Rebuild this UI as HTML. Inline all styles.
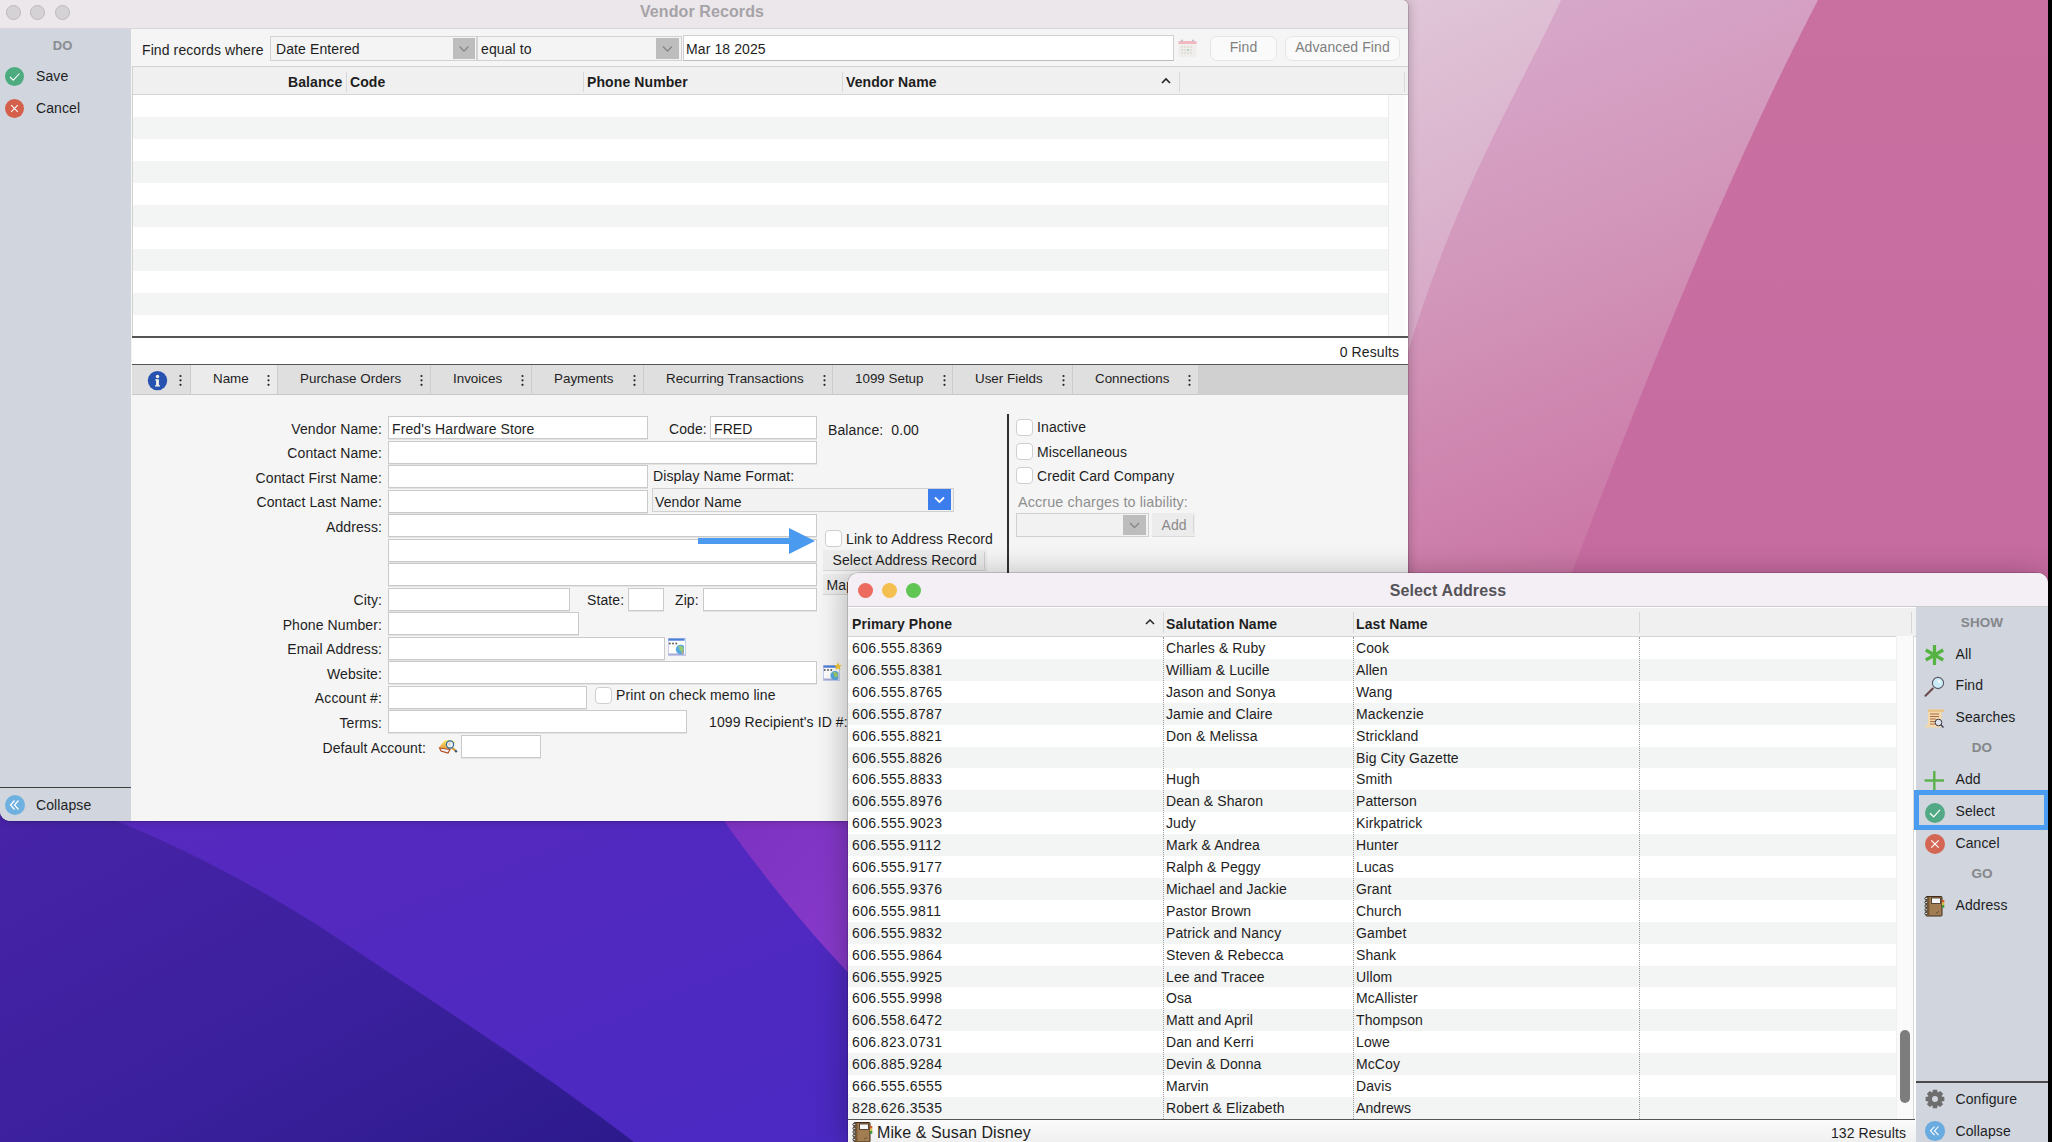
<!DOCTYPE html>
<html><head><meta charset="utf-8">
<style>
*{box-sizing:border-box;margin:0;padding:0}
html,body{width:2052px;height:1142px;overflow:hidden}
body{position:relative;background:#000;font-family:"Liberation Sans",sans-serif;font-size:14px;color:#1e1e1e}
.a{position:absolute}
.t{position:absolute;white-space:nowrap;line-height:1;letter-spacing:0.1px}
.b{font-weight:bold}
.num{font-size:14px;letter-spacing:0.4px}
.inp{background:#fff;border:1px solid #cacaca;box-shadow:0 1px 0 #e3e3e3}
</style></head><body>
<!-- desktop -->
<svg class="a" style="left:0;top:0" width="2048" height="1142" viewBox="0 0 2048 1142">
<defs>
<linearGradient id="pk" x1="0" y1="0" x2="0" y2="1">
<stop offset="0" stop-color="#c970a0"/><stop offset="1" stop-color="#c466a2"/></linearGradient>
<linearGradient id="pm" x1="0" y1="0" x2="0.3" y2="1">
<stop offset="0" stop-color="#d8acce"/><stop offset="0.5" stop-color="#d296ba"/><stop offset="1" stop-color="#cb78a6"/></linearGradient>
<linearGradient id="pl" x1="0" y1="0" x2="0.2" y2="1">
<stop offset="0" stop-color="#e0c6d8"/><stop offset="1" stop-color="#d6a4c4"/></linearGradient>
<linearGradient id="pu" x1="0" y1="0" x2="1" y2="1">
<stop offset="0" stop-color="#5829be"/><stop offset="1" stop-color="#4a29c2"/></linearGradient>
<linearGradient id="pd" x1="0" y1="0" x2="1" y2="1">
<stop offset="0" stop-color="#4824a8"/><stop offset="0.6" stop-color="#3a209c"/><stop offset="1" stop-color="#2c1a8c"/></linearGradient>
<linearGradient id="pg" x1="0" y1="0" x2="1" y2="1">
<stop offset="0" stop-color="#7a30c0"/><stop offset="1" stop-color="#8a3ccc"/></linearGradient>
</defs>
<rect x="0" y="0" width="2048" height="1142" fill="url(#pk)"/>
<path d="M1400 0 H1818 C1740 150 1660 340 1571 575 H1400 Z" fill="url(#pm)"/>
<path d="M1400 0 H1561 C1520 90 1450 200 1400 380 Z" fill="url(#pl)"/>
<rect x="0" y="800" width="860" height="342" fill="url(#pu)"/>
<path d="M0 800 H60 C150 830 250 880 340 940 C430 1000 540 1070 634 1142 H0 Z" fill="url(#pd)"/>
<path d="M709 800 C750 858 795 918 860 985 V800 Z" fill="url(#pg)"/>
</svg>
<div class="a" style="left:2048px;top:0;width:4px;height:1142px;background:#000"></div>

<!-- ============ VENDOR RECORDS WINDOW ============ -->
<div class="a" id="w1" style="left:0;top:0;width:1408px;height:821px;background:#f5f5f5;border-radius:0 6px 10px 10px;overflow:hidden;box-shadow:0 0 0 0.5px rgba(0,0,0,0.25),2px 0 10px rgba(0,0,0,0.2)">

<!-- title bar -->
<div class="a" style="left:0;top:0;width:1408px;height:29px;background:#ebe7eb;border-bottom:1px solid #d9d5da"></div>
<div class="a" style="left:6px;top:5px;width:15px;height:15px;border-radius:50%;background:#d5d2d6;border:1px solid #bcb8bd"></div>
<div class="a" style="left:30px;top:5px;width:15px;height:15px;border-radius:50%;background:#d5d2d6;border:1px solid #bcb8bd"></div>
<div class="a" style="left:55px;top:5px;width:15px;height:15px;border-radius:50%;background:#d5d2d6;border:1px solid #bcb8bd"></div>
<div class="t b" style="left:0;width:1404px;text-align:center;top:4px;font-size:16px;color:#a6a3a7">Vendor Records</div>
<!-- sidebar -->
<div class="a" style="left:0;top:29px;width:131px;height:792px;background:#d0d5de"></div>
<div class="t b" style="left:0;width:125px;text-align:center;top:39px;font-size:13px;color:#8a8c90">DO</div>
<div class="a" style="left:5px;top:67px;width:19px;height:19px;border-radius:50%;background:#4dab80"></div>
<svg class="a" style="left:5px;top:67px" width="19" height="19"><path d="M5 10 L8.3 13.2 L14.5 6.5" stroke="#fff" stroke-width="1.1" fill="none"/></svg>
<div class="t" style="left:36px;top:69px;font-size:14px">Save</div>
<div class="a" style="left:5px;top:99px;width:19px;height:19px;border-radius:50%;background:#d4604c"></div>
<svg class="a" style="left:5px;top:99px" width="19" height="19"><path d="M6.2 6.2 L12.8 12.8 M12.8 6.2 L6.2 12.8" stroke="#fff" stroke-width="1.1" fill="none"/></svg>
<div class="t" style="left:36px;top:101px;font-size:14px">Cancel</div>
<div class="a" style="left:0;top:787px;width:131px;height:1px;background:#404040"></div>
<div class="a" style="left:5px;top:795px;width:20px;height:20px;border-radius:50%;background:#6eb0e0"></div>
<svg class="a" style="left:5px;top:795px" width="20" height="20"><path d="M9.5 5.5 L5.5 10 L9.5 14.5 M13.5 5.5 L9.5 10 L13.5 14.5" stroke="#fff" stroke-width="1.2" fill="none"/></svg>
<div class="t" style="left:36px;top:798px;font-size:14px">Collapse</div>

<!-- find bar -->
<div class="t" style="left:142px;top:43px;font-size:14px">Find records where</div>
<div class="a" style="left:270px;top:36px;width:207px;height:25px;background:#f4f4f4;border:1px solid #d2d2d2"></div>
<div class="t" style="left:276px;top:42px;font-size:14px">Date Entered</div>
<div class="a" style="left:453px;top:38px;width:22px;height:21px;background:#bdbdbd"></div>
<svg class="a" style="left:453px;top:38px" width="22" height="21"><path d="M6.5 8.5 L11 13 L15.5 8.5" stroke="#868686" stroke-width="1.3" fill="none"/></svg>
<div class="a" style="left:477px;top:36px;width:205px;height:25px;background:#f4f4f4;border:1px solid #d2d2d2"></div>
<div class="t" style="left:481px;top:42px;font-size:14px">equal to</div>
<div class="a" style="left:656px;top:38px;width:23px;height:21px;background:#bdbdbd"></div>
<svg class="a" style="left:656px;top:38px" width="23" height="21"><path d="M7 8.5 L11.5 13 L16 8.5" stroke="#868686" stroke-width="1.3" fill="none"/></svg>
<div class="a" style="left:683px;top:35px;width:491px;height:26px;background:#fff;border:1px solid #cfcfcf;border-bottom-color:#bcbcbc"></div>
<div class="t" style="left:686px;top:42px;font-size:14px">Mar 18 2025</div>
<svg class="a" style="left:1178px;top:38px" width="19" height="20">
<rect x="0.5" y="3" width="18" height="16" fill="#f0eeec"/>
<rect x="0.5" y="3" width="18" height="3" fill="#f0b8c0"/>
<circle cx="4" cy="2.5" r="1" fill="#b9b9c8"/><circle cx="15" cy="2.5" r="1" fill="#b9b9c8"/>
<g fill="#e3e0dc"><rect x="3" y="8" width="2" height="2"/><rect x="6" y="8" width="2" height="2"/><rect x="9" y="8" width="2" height="2"/><rect x="12" y="8" width="2" height="2"/><rect x="3" y="11" width="2" height="2"/><rect x="12" y="11" width="2" height="2"/><rect x="3" y="14" width="2" height="2"/><rect x="6" y="14" width="2" height="2"/><rect x="9" y="14" width="2" height="2"/><rect x="12" y="14" width="2" height="2"/><rect x="6" y="11" width="2" height="2"/></g>
<rect x="9" y="11" width="2" height="2" fill="#a8dcc8"/>
</svg>
<div class="a" style="left:1210px;top:36px;width:67px;height:25px;background:#fafafa;border:1px solid #e6e6e6;border-radius:7px"></div>
<div class="t" style="left:1210px;width:67px;text-align:center;top:40px;font-size:14px;color:#7f7f7f">Find</div>
<div class="a" style="left:1285px;top:36px;width:115px;height:25px;background:#fafafa;border:1px solid #e6e6e6;border-radius:7px"></div>
<div class="t" style="left:1285px;width:115px;text-align:center;top:40px;font-size:14px;color:#7f7f7f">Advanced Find</div>

<!-- table -->
<div class="a" id="vt" style="left:132px;top:66px;width:1276px;height:272px;background:#fff;border-top:1px solid #d2d2d2;border-left:1px solid #d2d2d2"></div>
<div class="a" style="left:133px;top:67px;width:1275px;height:28px;background:#f0f0f0;border-bottom:1px solid #d6d6d6"></div>
<div class="a" style="left:133px;top:95px;width:1255px;height:22px;background:#fff"></div>
<div class="a" style="left:133px;top:117px;width:1255px;height:22px;background:#f3f4f4"></div>
<div class="a" style="left:133px;top:139px;width:1255px;height:22px;background:#fff"></div>
<div class="a" style="left:133px;top:161px;width:1255px;height:22px;background:#f3f4f4"></div>
<div class="a" style="left:133px;top:183px;width:1255px;height:22px;background:#fff"></div>
<div class="a" style="left:133px;top:205px;width:1255px;height:22px;background:#f3f4f4"></div>
<div class="a" style="left:133px;top:227px;width:1255px;height:22px;background:#fff"></div>
<div class="a" style="left:133px;top:249px;width:1255px;height:22px;background:#f3f4f4"></div>
<div class="a" style="left:133px;top:271px;width:1255px;height:22px;background:#fff"></div>
<div class="a" style="left:133px;top:293px;width:1255px;height:22px;background:#f3f4f4"></div>
<div class="a" style="left:133px;top:315px;width:1255px;height:22px;background:#fff"></div>

<div class="a" style="left:1388px;top:95px;width:17px;height:242px;background:#fafafa;border-left:1px solid #ececec"></div>
<div class="a" style="left:346px;top:72px;width:1px;height:20px;background:#d8d8d8"></div>
<div class="a" style="left:583px;top:72px;width:1px;height:20px;background:#d8d8d8"></div>
<div class="a" style="left:842px;top:72px;width:1px;height:20px;background:#d8d8d8"></div>
<div class="a" style="left:1179px;top:72px;width:1px;height:20px;background:#d8d8d8"></div>
<div class="a" style="left:1404px;top:72px;width:1px;height:20px;background:#d8d8d8"></div>
<div class="t b" style="left:288px;top:75px;font-size:14px">Balance</div>
<div class="t b" style="left:350px;top:75px;font-size:14px">Code</div>
<div class="t b" style="left:587px;top:75px;font-size:14px">Phone Number</div>
<div class="t b" style="left:846px;top:75px;font-size:14px">Vendor Name</div>
<svg class="a" style="left:1160px;top:76px" width="12" height="9"><path d="M2 7 L6 3 L10 7" stroke="#222" stroke-width="1.6" fill="none"/></svg>
<div class="a" style="left:132px;top:336px;width:1276px;height:2px;background:#555"></div>
<div class="a" style="left:132px;top:338px;width:1276px;height:26px;background:#fff"></div>
<div class="t" style="left:1000px;width:399px;text-align:right;top:345px;font-size:14px">0 Results</div>
<div class="a" style="left:132px;top:364px;width:1276px;height:1px;background:#555"></div>

<!-- tabs -->
<div class="a" style="left:132px;top:365px;width:1276px;height:30px;background:#d0d0d0"></div>
<div class="a" style="left:132px;top:365px;width:59px;height:30px;background:#dfdfdf;border-right:1px solid #cdcdcd;border-bottom:1px solid #c9c9c9"></div>
<svg class="a" style="left:178px;top:373px" width="4" height="14"><circle cx="2.5" cy="3" r="1.1" fill="#262626"/><circle cx="2.5" cy="7.3" r="1.1" fill="#262626"/><circle cx="2.5" cy="11.8" r="1.1" fill="#262626"/></svg>
<div class="a" style="left:191px;top:365px;width:87px;height:30px;background:#ebebeb;border-right:1px solid #cdcdcd;border-bottom:1px solid #c9c9c9"></div>
<div class="t" style="left:213px;top:372px;font-size:13.4px;letter-spacing:0">Name</div>
<svg class="a" style="left:266px;top:373px" width="4" height="14"><circle cx="2.5" cy="3" r="1.1" fill="#262626"/><circle cx="2.5" cy="7.3" r="1.1" fill="#262626"/><circle cx="2.5" cy="11.8" r="1.1" fill="#262626"/></svg>
<div class="a" style="left:278px;top:365px;width:153px;height:30px;background:#dfdfdf;border-right:1px solid #cdcdcd;border-bottom:1px solid #c9c9c9"></div>
<div class="t" style="left:300px;top:372px;font-size:13.4px;letter-spacing:0">Purchase Orders</div>
<svg class="a" style="left:419px;top:373px" width="4" height="14"><circle cx="2.5" cy="3" r="1.1" fill="#262626"/><circle cx="2.5" cy="7.3" r="1.1" fill="#262626"/><circle cx="2.5" cy="11.8" r="1.1" fill="#262626"/></svg>
<div class="a" style="left:431px;top:365px;width:101px;height:30px;background:#dfdfdf;border-right:1px solid #cdcdcd;border-bottom:1px solid #c9c9c9"></div>
<div class="t" style="left:453px;top:372px;font-size:13.4px;letter-spacing:0">Invoices</div>
<svg class="a" style="left:520px;top:373px" width="4" height="14"><circle cx="2.5" cy="3" r="1.1" fill="#262626"/><circle cx="2.5" cy="7.3" r="1.1" fill="#262626"/><circle cx="2.5" cy="11.8" r="1.1" fill="#262626"/></svg>
<div class="a" style="left:532px;top:365px;width:112px;height:30px;background:#dfdfdf;border-right:1px solid #cdcdcd;border-bottom:1px solid #c9c9c9"></div>
<div class="t" style="left:554px;top:372px;font-size:13.4px;letter-spacing:0">Payments</div>
<svg class="a" style="left:632px;top:373px" width="4" height="14"><circle cx="2.5" cy="3" r="1.1" fill="#262626"/><circle cx="2.5" cy="7.3" r="1.1" fill="#262626"/><circle cx="2.5" cy="11.8" r="1.1" fill="#262626"/></svg>
<div class="a" style="left:644px;top:365px;width:189px;height:30px;background:#dfdfdf;border-right:1px solid #cdcdcd;border-bottom:1px solid #c9c9c9"></div>
<div class="t" style="left:666px;top:372px;font-size:13.4px;letter-spacing:0">Recurring Transactions</div>
<svg class="a" style="left:822px;top:373px" width="4" height="14"><circle cx="2.5" cy="3" r="1.1" fill="#262626"/><circle cx="2.5" cy="7.3" r="1.1" fill="#262626"/><circle cx="2.5" cy="11.8" r="1.1" fill="#262626"/></svg>
<div class="a" style="left:833px;top:365px;width:120px;height:30px;background:#dfdfdf;border-right:1px solid #cdcdcd;border-bottom:1px solid #c9c9c9"></div>
<div class="t" style="left:855px;top:372px;font-size:13.4px;letter-spacing:0">1099 Setup</div>
<svg class="a" style="left:942px;top:373px" width="4" height="14"><circle cx="2.5" cy="3" r="1.1" fill="#262626"/><circle cx="2.5" cy="7.3" r="1.1" fill="#262626"/><circle cx="2.5" cy="11.8" r="1.1" fill="#262626"/></svg>
<div class="a" style="left:953px;top:365px;width:120px;height:30px;background:#dfdfdf;border-right:1px solid #cdcdcd;border-bottom:1px solid #c9c9c9"></div>
<div class="t" style="left:975px;top:372px;font-size:13.4px;letter-spacing:0">User Fields</div>
<svg class="a" style="left:1061px;top:373px" width="4" height="14"><circle cx="2.5" cy="3" r="1.1" fill="#262626"/><circle cx="2.5" cy="7.3" r="1.1" fill="#262626"/><circle cx="2.5" cy="11.8" r="1.1" fill="#262626"/></svg>
<div class="a" style="left:1073px;top:365px;width:126px;height:30px;background:#dfdfdf;border-right:1px solid #cdcdcd;border-bottom:1px solid #c9c9c9"></div>
<div class="t" style="left:1095px;top:372px;font-size:13.4px;letter-spacing:0">Connections</div>
<svg class="a" style="left:1187px;top:373px" width="4" height="14"><circle cx="2.5" cy="3" r="1.1" fill="#262626"/><circle cx="2.5" cy="7.3" r="1.1" fill="#262626"/><circle cx="2.5" cy="11.8" r="1.1" fill="#262626"/></svg>
<svg class="a" style="left:147px;top:370px" width="21" height="21" viewBox="0 0 21 21">
<circle cx="10.5" cy="10.6" r="9.7" fill="#2653b0"/>
<circle cx="10.5" cy="6.4" r="1.75" fill="#f4f1ea"/>
<path d="M8.3 9.3 H11.9 V15.2 H13 V16.4 H8 V15.2 H9.1 V10.5 H8.3 Z" fill="#f4f1ea"/>
</svg>


<div class="t" style="right:1026px;top:421.5px;font-size:14px">Vendor Name:</div>
<div class="t" style="right:1026px;top:446.0px;font-size:14px">Contact Name:</div>
<div class="t" style="right:1026px;top:470.5px;font-size:14px">Contact First Name:</div>
<div class="t" style="right:1026px;top:495.0px;font-size:14px">Contact Last Name:</div>
<div class="t" style="right:1026px;top:519.5px;font-size:14px">Address:</div>
<div class="t" style="right:1026px;top:593.0px;font-size:14px">City:</div>
<div class="t" style="right:1026px;top:617.5px;font-size:14px">Phone Number:</div>
<div class="t" style="right:1026px;top:642.0px;font-size:14px">Email Address:</div>
<div class="t" style="right:1026px;top:666.5px;font-size:14px">Website:</div>
<div class="t" style="right:1026px;top:691.0px;font-size:14px">Account #:</div>
<div class="t" style="right:1026px;top:715.5px;font-size:14px">Terms:</div>
<div class="a inp" style="left:388px;top:416px;width:260px;height:23px"></div>
<div class="t" style="left:392px;top:421.5px;font-size:14px">Fred's Hardware Store</div>
<div class="t" style="left:669px;top:421.5px;font-size:14px">Code:</div>
<div class="a inp" style="left:710px;top:416px;width:107px;height:23px"></div>
<div class="t" style="left:714px;top:421.5px;font-size:14px">FRED</div>
<div class="t" style="left:828px;top:422.5px;font-size:14px">Balance:&nbsp; 0.00</div>
<div class="a inp" style="left:388px;top:440.5px;width:429px;height:23px"></div>
<div class="a inp" style="left:388px;top:465px;width:260px;height:23px"></div>
<div class="t" style="left:653px;top:469px;font-size:14px">Display Name Format:</div>
<div class="a inp" style="left:388px;top:489.5px;width:260px;height:23px"></div>
<div class="a" style="left:652px;top:487.5px;width:302px;height:24px;background:#f2f2f2;border:1px solid #d0d0d0"></div>
<div class="t" style="left:655px;top:495.0px;font-size:14px">Vendor Name</div>
<div class="a" style="left:928px;top:489px;width:23px;height:21px;background:#3b7ded"></div>
<svg class="a" style="left:928px;top:489px" width="23" height="21"><path d="M7 8.5 L11.5 13 L16 8.5" stroke="#fff" stroke-width="1.8" fill="none"/></svg>
<div class="a inp" style="left:388px;top:514px;width:429px;height:23px"></div>
<div class="a inp" style="left:388px;top:538.5px;width:429px;height:23px"></div>
<div class="a inp" style="left:388px;top:563px;width:429px;height:23px"></div>
<div class="a inp" style="left:388px;top:587.5px;width:182px;height:23px"></div>
<div class="t" style="left:587px;top:593.0px;font-size:14px">State:</div>
<div class="a inp" style="left:628px;top:587.5px;width:36px;height:23px"></div>
<div class="t" style="left:675px;top:593.0px;font-size:14px">Zip:</div>
<div class="a inp" style="left:703px;top:587.5px;width:114px;height:23px"></div>
<div class="a inp" style="left:388px;top:612px;width:191px;height:23px"></div>
<div class="a inp" style="left:388px;top:636.5px;width:277px;height:23px"></div>
<div class="a inp" style="left:388px;top:661px;width:429px;height:23px"></div>
<div class="a inp" style="left:388px;top:685.5px;width:199px;height:23px"></div>
<div class="a inp" style="left:388px;top:710px;width:299px;height:23px"></div>
<div class="t" style="right:982px;top:740.5px;font-size:14px">Default Account:</div>
<div class="a inp" style="left:461px;top:735px;width:80px;height:23px"></div>
<svg class="a" style="left:696px;top:526px" width="122" height="30"><rect x="2" y="12" width="93" height="6" fill="#4a9af0"/><path d="M93 2 L119 15 L93 28 Z" fill="#4a9af0"/></svg>
<div class="a" style="left:825px;top:529.5px;width:17px;height:17px;background:#fff;border:1px solid #cfcfcf;border-radius:4px"></div>
<div class="t" style="left:846px;top:531.5px;font-size:14px">Link to Address Record</div>
<div class="a" style="left:823px;top:550px;width:164px;height:21px;background:#ececec;border-bottom:1px solid #d6d6d6"></div>
<div class="a" style="left:984px;top:552px;width:1px;height:17px;background:#d0d0d0"></div>
<div class="t" style="left:832.5px;top:553px;font-size:14px">Select Address Record</div>
<div class="a" style="left:823px;top:573.5px;width:60px;height:21px;background:#ececec;border-bottom:1px solid #d6d6d6"></div>
<div class="t" style="left:826.5px;top:578px;font-size:14px">Map</div>
<div class="a" style="left:1007px;top:414px;width:2px;height:160px;background:#303030"></div>
<div class="a" style="left:1016px;top:418.5px;width:17px;height:17px;background:#fff;border:1px solid #cfcfcf;border-radius:4px"></div>
<div class="t" style="left:1037px;top:420px;font-size:14px">Inactive</div>
<div class="a" style="left:1016px;top:443px;width:17px;height:17px;background:#fff;border:1px solid #cfcfcf;border-radius:4px"></div>
<div class="t" style="left:1037px;top:444.5px;font-size:14px">Miscellaneous</div>
<div class="a" style="left:1016px;top:467px;width:17px;height:17px;background:#fff;border:1px solid #cfcfcf;border-radius:4px"></div>
<div class="t" style="left:1037px;top:469px;font-size:14px">Credit Card Company</div>
<div class="t" style="left:1018px;top:494.5px;font-size:14.4px;color:#8f8f8f">Accrue charges to liability:</div>
<div class="a" style="left:1016px;top:513px;width:133px;height:24px;background:#f2f2f2;border:1px solid #d0d0d0"></div>
<div class="a" style="left:1123px;top:515px;width:23px;height:20px;background:#bdbdbd"></div>
<svg class="a" style="left:1123px;top:515px" width="23" height="20"><path d="M7 8 L11.5 12.5 L16 8" stroke="#868686" stroke-width="1.3" fill="none"/></svg>
<div class="a" style="left:1152px;top:513px;width:43px;height:24px;background:#ececec;border-bottom:1px solid #dadada"></div>
<div class="a" style="left:1193px;top:515px;width:1px;height:18px;background:#d8d8d8"></div>
<div class="t" style="left:1161.5px;top:518px;font-size:14px;color:#8a8a8a">Add</div>
<div class="a" style="left:595px;top:687px;width:16.5px;height:16.5px;background:#fff;border:1px solid #cfcfcf;border-radius:4px"></div>
<div class="t" style="left:616px;top:688px;font-size:14px">Print on check memo line</div>
<div class="t" style="left:709px;top:714.5px;font-size:14px">1099 Recipient's ID #:</div>
<svg class="a" style="left:668px;top:638px" width="18" height="18" viewBox="0 0 18 18">
<rect x="0.5" y="0.5" width="17" height="17" fill="#fdfdfb" stroke="#c6ccee" stroke-width="1"/>
<rect x="0.5" y="0.5" width="16" height="2.2" fill="#4a7fd6"/>
<rect x="0.5" y="15.5" width="16" height="1.6" fill="#a9a9d4"/>
<circle cx="1.8" cy="5.5" r="0.9" fill="#555"/><circle cx="5" cy="5.5" r="0.9" fill="#555"/><circle cx="8.3" cy="5.5" r="0.9" fill="#555"/>
<clipPath id="cg1"><rect x="0" y="0" width="16" height="17"/></clipPath>
<g clip-path="url(#cg1)"><circle cx="12.6" cy="11.5" r="4.8" fill="#58a8e0"/><path d="M10 8.5 q2 1 1.5 3.5 q1.5 2 3.5 1 q1 -2 0 -4 q-2 -1.5 -5 -0.5z" fill="#9ccc70"/><path d="M14 12 q1.5 1 1.5 3 l-2 0.5z" fill="#d0b060"/></g>
</svg>
<svg class="a" style="left:823px;top:662px" width="19" height="19" viewBox="0 0 19 19">
<rect x="0.5" y="3.5" width="16" height="15" fill="#fdfdfb" stroke="#c6ccee" stroke-width="1"/>
<rect x="0.5" y="3.5" width="15" height="2.2" fill="#4a7fd6"/>
<rect x="0.5" y="16.5" width="15" height="1.6" fill="#a9a9d4"/>
<circle cx="1.8" cy="8" r="0.9" fill="#555"/><circle cx="5" cy="8" r="0.9" fill="#555"/><circle cx="8.3" cy="8" r="0.9" fill="#555"/>
<clipPath id="cg2"><rect x="0" y="3" width="15.5" height="16"/></clipPath>
<g clip-path="url(#cg2)"><circle cx="12" cy="13.5" r="4.6" fill="#58a8e0"/><path d="M9.5 10.5 q2 1 1.5 3.5 q1.5 2 3.5 1 q1 -2 0 -4 q-2 -1.5 -5 -0.5z" fill="#9ccc70"/></g>
<path d="M15 0.3 l1.2 2.6 l2.8 0.3 l-2.1 1.9 l0.6 2.8 l-2.5 -1.5 l-2.5 1.5 l0.6 -2.8 l-2.1 -1.9 l2.8 -0.3 z" fill="#f3c93a"/>
</svg>
<svg class="a" style="left:438px;top:738px" width="20" height="16" viewBox="0 0 20 16">
<defs><linearGradient id="bk" x1="0" y1="0" x2="0" y2="1"><stop offset="0" stop-color="#f8ec70"/><stop offset="1" stop-color="#e89a38"/></linearGradient></defs>
<path d="M1 9.5 L6 3 Q7 2 9 2 L15 2.5 L17 4.5 L12 11 Z" fill="url(#bk)"/>
<path d="M1.5 10 L12 11.5 L10 15 L3 13 Z" fill="#f2f0f4" stroke="#b04818" stroke-width="1.1"/>
<path d="M13 9 L18 13" stroke="#c89030" stroke-width="2"/>
<circle cx="18" cy="13.3" r="1.2" fill="#3a5a78"/>
<circle cx="12" cy="6.5" r="3.6" fill="#e8f0f4" stroke="#2e6a9a" stroke-width="1.2"/>
<circle cx="11.4" cy="6" r="1.5" fill="#f0c8a0" opacity="0.7"/>
</svg>


</div>

<!-- ============ SELECT ADDRESS WINDOW ============ -->
<div class="a" id="w2" style="left:848px;top:573px;width:1200px;height:569px;background:#f4eff5;border-radius:10px 10px 0 0;overflow:hidden;box-shadow:0 0 0 0.5px rgba(0,0,0,0.3),-2px 2px 30px rgba(0,0,0,0.28)">
<div class="a" style="left:0;top:0;width:1200px;height:35px;background:#f4eff5;border-bottom:2px solid #cbc9cc"></div>
<div class="a" style="left:9.5px;top:10.0px;width:15px;height:15px;border-radius:50%;background:#ec6a5e"></div>
<div class="a" style="left:34.0px;top:10.0px;width:15px;height:15px;border-radius:50%;background:#f4bf4f"></div>
<div class="a" style="left:58.0px;top:10.0px;width:15px;height:15px;border-radius:50%;background:#61c554"></div>
<div class="t b" style="left:0;width:1200px;text-align:center;top:10px;font-size:16px;color:#555358">Select Address</div>
<div class="a" style="left:0;top:34px;width:1068px;height:535px;background:#fff"></div>
<div class="a" style="left:0;top:35px;width:1068px;height:29px;background:#f0f0f0;border-bottom:1px solid #d4d4d4"></div>
<div class="a" style="left:0;top:64.00px;width:1048px;height:21.9px;background:#fff"></div>
<div class="a" style="left:0;top:85.90px;width:1048px;height:21.9px;background:#f3f4f4"></div>
<div class="a" style="left:0;top:107.80px;width:1048px;height:21.9px;background:#fff"></div>
<div class="a" style="left:0;top:129.70px;width:1048px;height:21.9px;background:#f3f4f4"></div>
<div class="a" style="left:0;top:151.60px;width:1048px;height:21.9px;background:#fff"></div>
<div class="a" style="left:0;top:173.50px;width:1048px;height:21.9px;background:#f3f4f4"></div>
<div class="a" style="left:0;top:195.40px;width:1048px;height:21.9px;background:#fff"></div>
<div class="a" style="left:0;top:217.30px;width:1048px;height:21.9px;background:#f3f4f4"></div>
<div class="a" style="left:0;top:239.20px;width:1048px;height:21.9px;background:#fff"></div>
<div class="a" style="left:0;top:261.10px;width:1048px;height:21.9px;background:#f3f4f4"></div>
<div class="a" style="left:0;top:283.00px;width:1048px;height:21.9px;background:#fff"></div>
<div class="a" style="left:0;top:304.90px;width:1048px;height:21.9px;background:#f3f4f4"></div>
<div class="a" style="left:0;top:326.80px;width:1048px;height:21.9px;background:#fff"></div>
<div class="a" style="left:0;top:348.70px;width:1048px;height:21.9px;background:#f3f4f4"></div>
<div class="a" style="left:0;top:370.60px;width:1048px;height:21.9px;background:#fff"></div>
<div class="a" style="left:0;top:392.50px;width:1048px;height:21.9px;background:#f3f4f4"></div>
<div class="a" style="left:0;top:414.40px;width:1048px;height:21.9px;background:#fff"></div>
<div class="a" style="left:0;top:436.30px;width:1048px;height:21.9px;background:#f3f4f4"></div>
<div class="a" style="left:0;top:458.20px;width:1048px;height:21.9px;background:#fff"></div>
<div class="a" style="left:0;top:480.10px;width:1048px;height:21.9px;background:#f3f4f4"></div>
<div class="a" style="left:0;top:502.00px;width:1048px;height:21.9px;background:#fff"></div>
<div class="a" style="left:0;top:523.90px;width:1048px;height:21.9px;background:#f3f4f4"></div>
<div class="a" style="left:1048px;top:63.299999999999955px;width:18px;height:482.70000000000005px;background:#fafafa;border-left:1px solid #f0f0f0;border-right:1px solid #d8d8d8"></div>
<div class="a" style="left:1052px;top:457px;width:10px;height:73px;background:#7d7d7d;border-radius:5px"></div>
<div class="a" style="left:315px;top:39px;width:1px;height:21px;background:#d6d6d6"></div>
<div class="a" style="left:505px;top:39px;width:1px;height:21px;background:#d6d6d6"></div>
<div class="a" style="left:790.5px;top:39px;width:1px;height:21px;background:#d6d6d6"></div>
<div class="a" style="left:1063px;top:39px;width:1px;height:21px;background:#d6d6d6"></div>
<div class="a" style="left:315px;top:64px;width:0;height:482px;border-left:1px dotted #9a9a9a"></div>
<div class="a" style="left:505px;top:64px;width:0;height:482px;border-left:1px dotted #9a9a9a"></div>
<div class="a" style="left:790.5px;top:64px;width:0;height:482px;border-left:1px dotted #9a9a9a"></div>
<div class="t b" style="left:4px;top:44px;font-size:14px">Primary Phone</div>
<div class="t b" style="left:318px;top:44px;font-size:14px">Salutation Name</div>
<div class="t b" style="left:508px;top:44px;font-size:14px">Last Name</div>
<svg class="a" style="left:296px;top:44px" width="12" height="9"><path d="M2 7 L6 3 L10 7" stroke="#222" stroke-width="1.5" fill="none"/></svg>
<div class="t num" style="left:4px;top:68.00px">606.555.8369</div>
<div class="t" style="left:318px;top:68.00px">Charles &amp; Ruby</div>
<div class="t" style="left:508px;top:68.00px">Cook</div>
<div class="t num" style="left:4px;top:89.90px">606.555.8381</div>
<div class="t" style="left:318px;top:89.90px">William &amp; Lucille</div>
<div class="t" style="left:508px;top:89.90px">Allen</div>
<div class="t num" style="left:4px;top:111.80px">606.555.8765</div>
<div class="t" style="left:318px;top:111.80px">Jason and Sonya</div>
<div class="t" style="left:508px;top:111.80px">Wang</div>
<div class="t num" style="left:4px;top:133.70px">606.555.8787</div>
<div class="t" style="left:318px;top:133.70px">Jamie and Claire</div>
<div class="t" style="left:508px;top:133.70px">Mackenzie</div>
<div class="t num" style="left:4px;top:155.60px">606.555.8821</div>
<div class="t" style="left:318px;top:155.60px">Don &amp; Melissa</div>
<div class="t" style="left:508px;top:155.60px">Strickland</div>
<div class="t num" style="left:4px;top:177.50px">606.555.8826</div>
<div class="t" style="left:508px;top:177.50px">Big City Gazette</div>
<div class="t num" style="left:4px;top:199.40px">606.555.8833</div>
<div class="t" style="left:318px;top:199.40px">Hugh</div>
<div class="t" style="left:508px;top:199.40px">Smith</div>
<div class="t num" style="left:4px;top:221.30px">606.555.8976</div>
<div class="t" style="left:318px;top:221.30px">Dean &amp; Sharon</div>
<div class="t" style="left:508px;top:221.30px">Patterson</div>
<div class="t num" style="left:4px;top:243.20px">606.555.9023</div>
<div class="t" style="left:318px;top:243.20px">Judy</div>
<div class="t" style="left:508px;top:243.20px">Kirkpatrick</div>
<div class="t num" style="left:4px;top:265.10px">606.555.9112</div>
<div class="t" style="left:318px;top:265.10px">Mark &amp; Andrea</div>
<div class="t" style="left:508px;top:265.10px">Hunter</div>
<div class="t num" style="left:4px;top:287.00px">606.555.9177</div>
<div class="t" style="left:318px;top:287.00px">Ralph &amp; Peggy</div>
<div class="t" style="left:508px;top:287.00px">Lucas</div>
<div class="t num" style="left:4px;top:308.90px">606.555.9376</div>
<div class="t" style="left:318px;top:308.90px">Michael and Jackie</div>
<div class="t" style="left:508px;top:308.90px">Grant</div>
<div class="t num" style="left:4px;top:330.80px">606.555.9811</div>
<div class="t" style="left:318px;top:330.80px">Pastor Brown</div>
<div class="t" style="left:508px;top:330.80px">Church</div>
<div class="t num" style="left:4px;top:352.70px">606.555.9832</div>
<div class="t" style="left:318px;top:352.70px">Patrick and Nancy</div>
<div class="t" style="left:508px;top:352.70px">Gambet</div>
<div class="t num" style="left:4px;top:374.60px">606.555.9864</div>
<div class="t" style="left:318px;top:374.60px">Steven &amp; Rebecca</div>
<div class="t" style="left:508px;top:374.60px">Shank</div>
<div class="t num" style="left:4px;top:396.50px">606.555.9925</div>
<div class="t" style="left:318px;top:396.50px">Lee and Tracee</div>
<div class="t" style="left:508px;top:396.50px">Ullom</div>
<div class="t num" style="left:4px;top:418.40px">606.555.9998</div>
<div class="t" style="left:318px;top:418.40px">Osa</div>
<div class="t" style="left:508px;top:418.40px">McAllister</div>
<div class="t num" style="left:4px;top:440.30px">606.558.6472</div>
<div class="t" style="left:318px;top:440.30px">Matt and April</div>
<div class="t" style="left:508px;top:440.30px">Thompson</div>
<div class="t num" style="left:4px;top:462.20px">606.823.0731</div>
<div class="t" style="left:318px;top:462.20px">Dan and Kerri</div>
<div class="t" style="left:508px;top:462.20px">Lowe</div>
<div class="t num" style="left:4px;top:484.10px">606.885.9284</div>
<div class="t" style="left:318px;top:484.10px">Devin &amp; Donna</div>
<div class="t" style="left:508px;top:484.10px">McCoy</div>
<div class="t num" style="left:4px;top:506.00px">666.555.6555</div>
<div class="t" style="left:318px;top:506.00px">Marvin</div>
<div class="t" style="left:508px;top:506.00px">Davis</div>
<div class="t num" style="left:4px;top:527.90px">828.626.3535</div>
<div class="t" style="left:318px;top:527.90px">Robert &amp; Elizabeth</div>
<div class="t" style="left:508px;top:527.90px">Andrews</div>
<div class="a" style="left:0;top:545.5px;width:1067px;height:1.5px;background:#555"></div>
<div class="a" style="left:0;top:547px;width:1068px;height:22px;background:linear-gradient(#fbfbfb,#f0f0f0)"></div>
<div class="t" style="left:29px;top:552px;font-size:16px">Mike &amp; Susan Disney</div>
<div class="t" style="left:752px;width:306px;text-align:right;top:553px;font-size:14px">132 Results</div>
<svg class="a" style="left:4px;top:548px" width="21" height="22" viewBox="0 0 21 22">
<rect x="2" y="1.5" width="16" height="19.5" rx="0.8" fill="#a27d52" stroke="#3e2c18" stroke-width="1"/>
<rect x="3" y="2" width="2.5" height="18.5" fill="#7a5a35"/>
<rect x="7.5" y="3" width="9" height="5.5" fill="#f4f6f8" stroke="#3e2c18" stroke-width="0.8"/>
<g fill="#f2f2f2" stroke="#2a2a2a" stroke-width="0.8"><ellipse cx="2.2" cy="3.5" rx="1.6" ry="1"/><ellipse cx="2.2" cy="7.3" rx="1.6" ry="1"/><ellipse cx="2.2" cy="11" rx="1.6" ry="1"/><ellipse cx="2.2" cy="14.8" rx="1.6" ry="1"/><ellipse cx="2.2" cy="18.5" rx="1.6" ry="1"/></g>
<rect x="18" y="5" width="2.3" height="2.5" fill="#d85a28"/><rect x="18" y="7.5" width="2.3" height="2.5" fill="#d8c040"/><rect x="18" y="10" width="2.3" height="2.8" fill="#3a9a40"/>
<path d="M12 18 q2 0 3 -2" stroke="#5a4028" stroke-width="0.7" fill="none"/>
</svg>

<div class="a" style="left:1068px;top:34px;width:132px;height:535px;background:#d0d5de"></div>
<div class="t b" style="left:1068px;width:132px;text-align:center;top:43px;font-size:13.5px;color:#858789">SHOW</div>
<div class="t" style="left:1107.5px;top:73.60000000000002px;font-size:14px">All</div>
<div class="t" style="left:1107.5px;top:105.39999999999998px;font-size:14px">Find</div>
<div class="t" style="left:1107.5px;top:136.89999999999998px;font-size:14px">Searches</div>
<div class="t b" style="left:1068px;width:132px;text-align:center;top:168.39999999999998px;font-size:13.5px;color:#858789">DO</div>
<div class="t" style="left:1107.5px;top:198.79999999999995px;font-size:14px">Add</div>
<div class="a" style="left:1066px;top:217px;width:135px;height:40px;border:5.5px solid #4a9cf0"></div>
<div class="t" style="left:1107.5px;top:230.79999999999995px;font-size:14px">Select</div>
<div class="t" style="left:1107.5px;top:262.5px;font-size:14px">Cancel</div>
<div class="t b" style="left:1068px;width:132px;text-align:center;top:294px;font-size:13.5px;color:#858789">GO</div>
<div class="t" style="left:1107.5px;top:324.6px;font-size:14px">Address</div>
<div class="a" style="left:1068px;top:508px;width:132px;height:1.5px;background:#4a4a4a"></div>
<div class="t" style="left:1107.5px;top:518.5px;font-size:14px">Configure</div>
<div class="t" style="left:1107.5px;top:551px;font-size:14px">Collapse</div>
<svg class="a" style="left:1076px;top:71px" width="21" height="22" viewBox="0 0 21 22"><g stroke="#55b341" stroke-width="3.2"><path d="M10.5 1 V21"/><path d="M1.8 6 L19.2 16"/><path d="M1.8 16 L19.2 6"/></g></svg>
<svg class="a" style="left:1076px;top:103px" width="21" height="21" viewBox="0 0 21 21">
<path d="M8.8 12.5 L1.5 19.8" stroke="#6e4a48" stroke-width="2" stroke-linecap="round"/>
<circle cx="14" cy="7" r="5.6" fill="#c9ecf7" stroke="#5b5565" stroke-width="1.1"/>
<circle cx="15.2" cy="5.6" r="1.4" fill="#fff"/>
</svg>
<svg class="a" style="left:1076px;top:135px" width="21" height="21" viewBox="0 0 21 21">
<path d="M4 1.5 H19 q1.2 0 1.2 1.2 q0 1.3 -1.2 1.3 H17.5 V18 q0 1.5 -1.5 1.5 H2 q-1.2 0 -1.2 -1.2 q0 -1.3 1.2 -1.3 H4 Z" fill="#f4d9ac"/>
<path d="M4 1.5 H19 q1.2 0 1.2 1.2 q0 1.3 -1.2 1.3 H4 Z" fill="#e9c48a"/>
<g stroke="#a86a48" stroke-width="1"><path d="M6 6 H15"/><path d="M6 8.5 H15"/><path d="M6 11 H12"/><path d="M6 13.5 H11"/><path d="M6 16 H11"/></g>
<circle cx="14.5" cy="14.5" r="3.3" fill="#dfe3ee" stroke="#3e3a48" stroke-width="1"/>
<path d="M16.8 16.8 L19.5 19.5" stroke="#3e3a48" stroke-width="1.3"/>
</svg>
<svg class="a" style="left:1076px;top:198px" width="21" height="19" viewBox="0 0 21 19"><g stroke="#5cb04a" stroke-width="2.4"><path d="M10.3 0 V19"/><path d="M0.6 9.5 H20"/></g></svg>
<div class="a" style="left:1076.5px;top:229.5px;width:20px;height:20px;border-radius:50%;background:#52a985"></div>
<svg class="a" style="left:1076.5px;top:229.5px" width="20" height="20"><path d="M5 10.3 L8.6 13.8 L15 6.8" stroke="#fff" stroke-width="1.2" fill="none"/></svg>
<div class="a" style="left:1076.5px;top:261.20000000000005px;width:20px;height:20px;border-radius:50%;background:#d36753"></div>
<svg class="a" style="left:1076.5px;top:261.20000000000005px" width="20" height="20"><path d="M6.3 6.3 L13.7 13.7 M13.7 6.3 L6.3 13.7" stroke="#fff" stroke-width="1.2" fill="none"/></svg>
<svg class="a" style="left:1076px;top:322px" width="21" height="22" viewBox="0 0 21 22">
<rect x="2" y="1.5" width="16" height="19.5" rx="0.8" fill="#a27d52" stroke="#3e2c18" stroke-width="1"/>
<rect x="3" y="2" width="2.5" height="18.5" fill="#7a5a35"/>
<rect x="7.5" y="3" width="9" height="5.5" fill="#f4f6f8" stroke="#3e2c18" stroke-width="0.8"/>
<g fill="#f2f2f2" stroke="#2a2a2a" stroke-width="0.8"><ellipse cx="2.2" cy="3.5" rx="1.6" ry="1"/><ellipse cx="2.2" cy="7.3" rx="1.6" ry="1"/><ellipse cx="2.2" cy="11" rx="1.6" ry="1"/><ellipse cx="2.2" cy="14.8" rx="1.6" ry="1"/><ellipse cx="2.2" cy="18.5" rx="1.6" ry="1"/></g>
<rect x="18" y="5" width="2.3" height="2.5" fill="#d85a28"/><rect x="18" y="7.5" width="2.3" height="2.5" fill="#d8c040"/><rect x="18" y="10" width="2.3" height="2.8" fill="#3a9a40"/>
<path d="M12 18 q2 0 3 -2" stroke="#5a4028" stroke-width="0.7" fill="none"/>
</svg>
<svg class="a" style="left:1076.5px;top:516px" width="20" height="20" viewBox="0 0 20 20"><path d="M19.37 7.90 L19.37 12.10 L16.74 12.54 L16.56 12.97 L18.11 15.14 L15.14 18.11 L12.97 16.56 L12.54 16.74 L12.10 19.37 L7.90 19.37 L7.46 16.74 L7.03 16.56 L4.86 18.11 L1.89 15.14 L3.44 12.97 L3.26 12.54 L0.63 12.10 L0.63 7.90 L3.26 7.46 L3.44 7.03 L1.89 4.86 L4.86 1.89 L7.03 3.44 L7.46 3.26 L7.90 0.63 L12.10 0.63 L12.54 3.26 L12.97 3.44 L15.14 1.89 L18.11 4.86 L16.56 7.03 L16.74 7.46 Z M13 10 A3 3 0 1 0 7 10 A3 3 0 1 0 13 10 Z" fill="#6d6d6d" fill-rule="evenodd"/></svg>
<div class="a" style="left:1077px;top:548px;width:19.5px;height:19.5px;border-radius:50%;background:#6aabdf"></div>
<svg class="a" style="left:1077px;top:548px" width="20" height="20"><path d="M9.5 5.5 L5.5 9.8 L9.5 14.1 M13.5 5.5 L9.5 9.8 L13.5 14.1" stroke="#fff" stroke-width="1.1" fill="none"/></svg>

</div>
</body></html>
